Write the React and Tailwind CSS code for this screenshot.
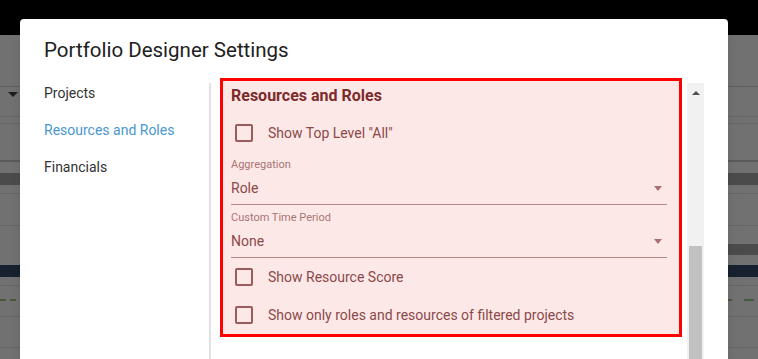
const Checkbox = ({ label }) => (
  <div className="h-[38px] flex items-center pl-[4px]">
    <span className="w-[18px] h-[18px] border-2 border-[#9c5b5b] rounded-[2px] flex-shrink-0"/>
    <span className="ml-[15px] text-[14px] text-[#8b4848]">{label}</span>
  </div>
)

const Select = ({ label, value }) => (
  <div className="pr-[12px]">
    <div className="mt-[5px] h-[16px] flex items-center text-[11px] text-[#a87474]">{label}</div>
    <div className="h-[32px] flex items-center justify-between border-b border-[#b88686]">
      <span className="text-[14px] text-[#8b4848]">{value}</span>
      <span className="mr-[5px] w-0 h-0 border-l-[4px] border-r-[4px] border-t-[5px] border-l-transparent border-r-transparent border-t-[#a87070]"/>
    </div>
  </div>
)

export default function App() {
  return (
    <div className="relative w-[758px] h-[359px] overflow-hidden font-['Roboto',sans-serif]">

      {/* ── Backdrop ── */}
      <div className="flex flex-col h-full bg-[#717171]">
        <div className="h-[35px] bg-black flex-shrink-0"/>
        <div className="h-[52px] border-b border-[#5e5e5e] flex items-end pb-[10px] pl-[21px]">
          <span className="w-0 h-0 border-l-[5px] border-r-[5px] border-t-[5px] border-l-transparent border-r-transparent border-t-[#1e1e1e] -mb-[21px] -ml-[13px]"/>
        </div>
        <div className="h-[30px] border-b border-[#666]"/>
        <div className="h-[7px] border-b border-[#666]"/>
        <div className="h-[38px] border-b-2 border-[#5a5a5a]"/>
        <div className="h-[11px]"/>
        <div className="h-[12px] bg-[#4b4b4b]"/>
        <div className="h-[9px] border-b border-[#666]"/>
        <div className="h-[32px] border-b border-[#666]"/>
        <div className="h-[18px]"/>
        <div className="h-[11px] flex justify-end"><div className="w-[40px] bg-[#4b4b4b]"/></div>
        <div className="h-[10px]"/>
        <div className="h-[12px] bg-[#17212f]"/>
        <div className="h-[9px] border-b border-[#666]"/>
        <div className="h-[15px] flex items-end justify-between">
          <div className="flex gap-[4px]"><span className="w-[6px] h-[2px] bg-[#445a3c]"/><span className="w-[6px] h-[2px] bg-[#445a3c]"/></div>
          <div className="flex gap-[12px] pr-[4px]"><span className="w-[10px] h-[2px] bg-[#445a3c]"/><span className="w-[10px] h-[2px] bg-[#445a3c]"/></div>
        </div>
        <div className="h-[16px] border-b border-[#666]"/>
        <div className="h-[31px] border-b border-[#666]"/>
      </div>

      {/* ── Dialog ── */}
      <div className="absolute left-[20px] top-[19px] w-[708px] h-[360px] bg-white rounded-[4px] shadow-lg pt-[17px]">
        <h1 className="pl-[24px] text-[20.5px] leading-[28px] text-[#212121]">Portfolio Designer Settings</h1>

        <div className="mt-[14px] flex h-[300px]">
          <nav className="w-[165px] ml-[24px] pt-[5px] flex flex-col gap-[17px] text-[14px] leading-[20px]">
            <span className="text-[#333]">Projects</span>
            <span className="text-[#4a97cf]">Resources and Roles</span>
            <span className="text-[#333]">Financials</span>
          </nav>
          <div className="w-[2px] mt-[5px] bg-[#e4e4e4]"/>

          <div className="flex-1 pl-[9px] pr-[5px]">
            <div className="h-[259px] border-[3px] border-[#ff0000] bg-[#fde8e8] pl-[8px]">
              <h2 className="mt-[3px] h-[24px] flex items-center text-[16px] font-bold text-[#7c2b2b]">Resources and Roles</h2>
              <div className="mt-[6px]"><Checkbox label={'Show Top Level "All"'}/></div>
              <Select label="Aggregation" value="Role"/>
              <Select label="Custom Time Period" value="None"/>
              <Checkbox label="Show Resource Score"/>
              <Checkbox label="Show only roles and resources of filtered projects"/>
            </div>
          </div>

          {/* scrollbar */}
          <div className="w-[17px] mt-[5px] mr-[24px] bg-[#f1f1f1] flex flex-col items-center">
            <span className="mt-[8px] w-0 h-0 border-l-[4px] border-r-[4px] border-b-[4px] border-l-transparent border-r-transparent border-b-[#505050]"/>
            <div className="mt-[151px] w-[13px] flex-1 bg-[#c1c1c1]"/>
          </div>
        </div>
      </div>
    </div>
  )
}
